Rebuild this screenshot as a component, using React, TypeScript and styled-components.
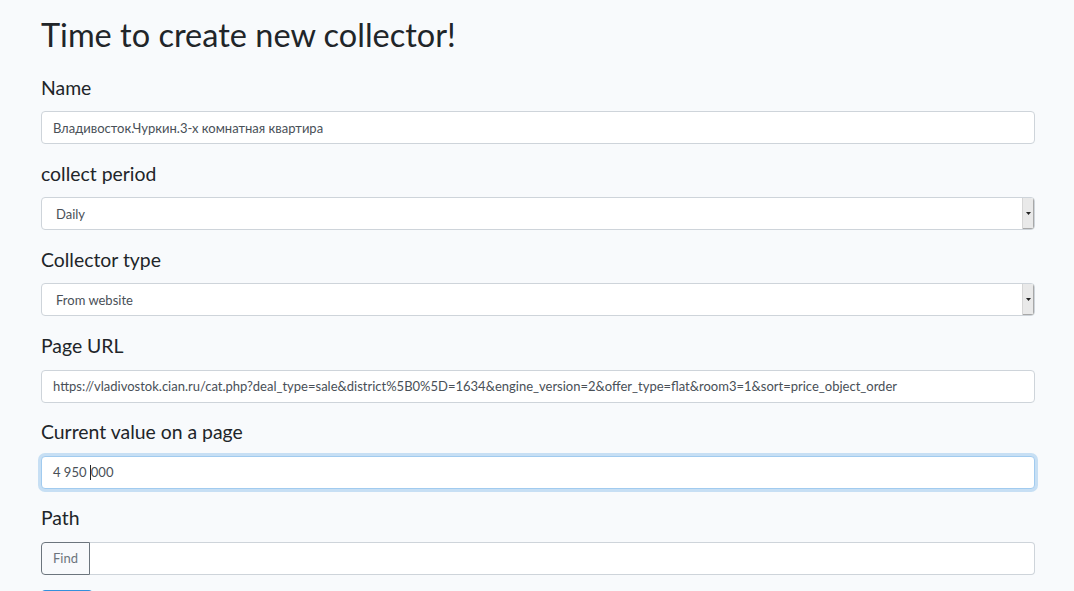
import React from 'react';
import styled, { createGlobalStyle } from 'styled-components';

const GlobalStyle = createGlobalStyle`
  html, body {
    margin: 0;
    padding: 0;
    background: #f8fafc;
  }
  body {
    font-family: Lato, "Noto Sans", "Liberation Sans", sans-serif;
    color: #212529;
  }
`;

const Page = styled.div`
  padding: 15px 39px 0 41px;
  overflow: hidden;
  height: 591px;
  box-sizing: border-box;
`;

const Title = styled.h1`
  margin: 0 0 18px 0;
  font-size: 32.5px;
  line-height: 40px;
  font-weight: 400;
  color: #212529;
`;

const Group = styled.div`
  margin-bottom: 15.2px;
`;

const Label = styled.label`
  display: block;
  font-size: 19.4px;
  line-height: 28px;
  padding-top: 0.5px;
  margin-bottom: 9.5px;
  color: #212529;
`;

const Input = styled.input`
  display: block;
  width: 100%;
  height: 33px;
  box-sizing: border-box;
  padding: 0 11px;
  font-family: inherit;
  font-size: 13px;
  color: #495057;
  background: #fff;
  border: 1px solid #ced4da;
  border-radius: 4px;
  outline: none;
`;

// mimics the focused field, with its caret
const FocusedField = styled.div`
  display: flex;
  align-items: center;
  height: 33px;
  box-sizing: border-box;
  padding: 0 11px;
  font-size: 13px;
  color: #495057;
  background: #fff;
  border: 1px solid #a1cbef;
  border-radius: 4px;
  box-shadow: 0 0 0 3px rgba(52, 144, 220, 0.25);
  white-space: pre;
`;

const Caret = styled.span`
  display: inline-block;
  width: 1px;
  height: 15px;
  background: #212529;
`;

const SelectBox = styled.div`
  display: flex;
  height: 33px;
  box-sizing: border-box;
  background: #fff;
  border: 1px solid #ced4da;
  border-radius: 4px;
  overflow: hidden;
`;

const NativeSelect = styled.select`
  flex: 1;
  appearance: none;
  border: none;
  background: transparent;
  padding: 0 0 0 14px;
  font-family: inherit;
  font-size: 13px;
  color: #495057;
  outline: none;
`;

const ArrowBox = styled.span`
  width: 11px;
  display: flex;
  align-items: center;
  justify-content: center;
  background: #e9e9e9;
  border-left: 1px solid #d6d6d6;
  box-shadow: inset -1px -1px 0 #a8a8a8;
`;

const InputGroup = styled.div`
  display: flex;
  height: 33px;
`;

const FindButton = styled.button`
  flex: none;
  width: 49px;
  height: 33px;
  box-sizing: border-box;
  font-family: inherit;
  font-size: 13px;
  color: #6c757d;
  background: transparent;
  border: 1px solid #6c757d;
  border-radius: 4px 0 0 4px;
  padding: 0;
`;

const GroupInput = styled(Input)`
  flex: 1;
  border-left: none;
  border-radius: 0 4px 4px 0;
`;

// only its top edge shows at the bottom of the window
const SaveButton = styled.button`
  display: block;
  width: 52px;
  height: 33px;
  border: 1px solid #3490dc;
  border-radius: 4px;
  background: #3490dc;
`;

const Select: React.FC<{ value: string; options: string[] }> = ({ value, options }) => (
  <SelectBox>
    <NativeSelect defaultValue={value}>
      {options.map((o) => (
        <option key={o}>{o}</option>
      ))}
    </NativeSelect>
    <ArrowBox>
      <svg width="5" height="3" viewBox="0 0 5 3">
        <path d="M0 0H5L2.5 3Z" fill="#222" />
      </svg>
    </ArrowBox>
  </SelectBox>
);

const url =
  'https://vladivostok.cian.ru/cat.php?deal_type=sale&district%5B0%5D=1634&engine_version=2&offer_type=flat&room3=1&sort=price_object_order';

export default function App() {
  return (
    <>
      <GlobalStyle />
      <Page>
        <Title>Time to create new collector!</Title>

        <Group>
          <Label>Name</Label>
          <Input readOnly defaultValue="Владивосток.Чуркин.3-х комнатная квартира" />
        </Group>

        <Group>
          <Label>collect period</Label>
          <Select value="Daily" options={['Daily', 'Weekly', 'Monthly']} />
        </Group>

        <Group>
          <Label>Collector type</Label>
          <Select value="From website" options={['From website', 'Manual']} />
        </Group>

        <Group>
          <Label>Page URL</Label>
          <Input readOnly defaultValue={url} />
        </Group>

        <Group>
          <Label>Current value on a page</Label>
          <FocusedField role="textbox">
            4 950 <Caret />000
          </FocusedField>
        </Group>

        <Group>
          <Label>Path</Label>
          <InputGroup>
            <FindButton>Find</FindButton>
            <GroupInput readOnly defaultValue="" />
          </InputGroup>
        </Group>

        <SaveButton aria-label="Save" />
      </Page>
    </>
  );
}
